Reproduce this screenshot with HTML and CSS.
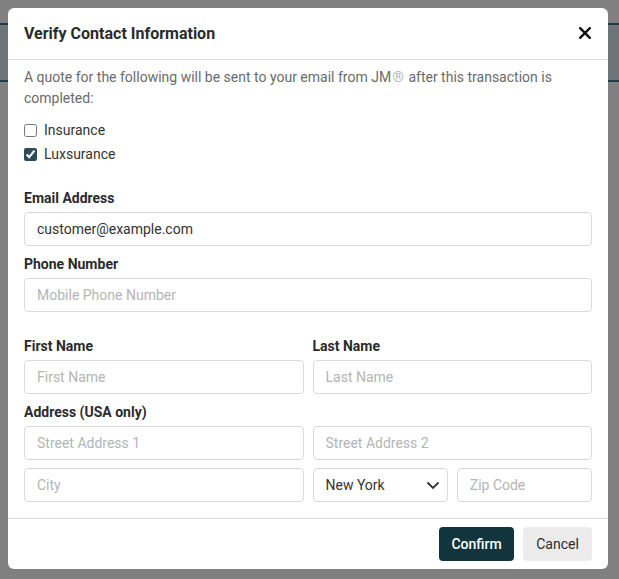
FILE: index.html
```html
<!DOCTYPE html>
<html lang="en">
<head>
<meta charset="utf-8">
<title>Verify Contact Information</title>
<link rel="stylesheet" href="styles.css">
</head>
<body>
<div class="page">
  <div class="page-band"></div>
</div>

<div class="modal" role="dialog" aria-labelledby="modal-title">
  <div class="modal-header">
    <h2 class="modal-title" id="modal-title">Verify Contact Information</h2>
    <button class="close-btn" type="button" aria-label="Close">
      <svg width="12" height="12" viewBox="0 0 12 12" aria-hidden="true">
        <path d="M1.2 1.2 L10.8 10.8 M10.8 1.2 L1.2 10.8" stroke="#111" stroke-width="2.4" stroke-linecap="square" fill="none"/>
      </svg>
    </button>
  </div>

  <div class="modal-body">
    <p class="intro">A quote for the following will be sent to your email from JM<span class="reg">®</span> after this transaction is completed:</p>

    <div class="checks">
      <label class="check-row"><input type="checkbox" class="check"> <span>Insurance</span></label>
      <label class="check-row"><input type="checkbox" class="check" checked> <span>Luxsurance</span></label>
    </div>

    <div class="field field-first">
      <label class="field-label" for="email">Email Address</label>
      <input class="input" id="email" type="text" value="customer@example.com">
    </div>

    <div class="field">
      <label class="field-label" for="phone">Phone Number</label>
      <input class="input" id="phone" type="text" placeholder="Mobile Phone Number">
    </div>

    <div class="grid-2 section">
      <div>
        <label class="field-label" for="fn">First Name</label>
        <input class="input" id="fn" type="text" placeholder="First Name">
      </div>
      <div>
        <label class="field-label" for="ln">Last Name</label>
        <input class="input" id="ln" type="text" placeholder="Last Name">
      </div>
    </div>

    <div class="field">
      <label class="field-label">Address (USA only)</label>
      <div class="grid-2">
        <input class="input" type="text" placeholder="Street Address 1">
        <input class="input" type="text" placeholder="Street Address 2">
      </div>
      <div class="grid-2 row-gap">
        <input class="input" type="text" placeholder="City">
        <div class="grid-2">
          <div class="select">
            <span>New York</span>
            <svg width="14" height="9" viewBox="0 0 14 9" aria-hidden="true">
              <path d="M1.5 1.5 L7 7 L12.5 1.5" stroke="#333" stroke-width="1.8" fill="none"/>
            </svg>
          </div>
          <input class="input" type="text" placeholder="Zip Code">
        </div>
      </div>
    </div>
  </div>

  <div class="modal-footer">
    <button class="btn btn-primary" type="button">Confirm</button>
    <button class="btn btn-secondary" type="button">Cancel</button>
  </div>
</div>
</body>
</html>
```

FILE: styles.css
```css
* {
  box-sizing: border-box;
}

html, body {
  margin: 0;
  padding: 0;
}

body {
  background: #808080;
  font-family: Roboto, "Liberation Sans", Arial, sans-serif;
  width: 619px;
  height: 579px;
  overflow: hidden;
  position: relative;
}

.page {
  padding-top: 23px;
}

.page-band {
  height: 59px;
  background: #6d757b;
  border-top: 2px solid #1f3c4a;
  border-bottom: 2px solid #1f3c4a;
}

.modal {
  position: absolute;
  top: 8px;
  left: 8px;
  width: 600px;
  height: 561px;
  background: #fff;
  border-radius: 6px;
  display: flex;
  flex-direction: column;
}

.modal-header {
  height: 52px;
  padding: 0 16px;
  display: flex;
  align-items: center;
  justify-content: space-between;
  border-bottom: 1px solid #dcdcdc;
}

.modal-title {
  margin: 0;
  font-size: 16px;
  font-weight: 700;
  color: #2b2b2b;
}

.close-btn {
  border: 0;
  background: none;
  padding: 0;
  width: 14px;
  height: 14px;
  display: flex;
  align-items: center;
  justify-content: center;
  margin-top: -1px;
}

.modal-body {
  flex: 1;
  padding: 7px 16px 0;
}

.intro {
  margin: 0;
  font-size: 14px;
  line-height: 21px;
  color: #6b6b6b;
}

.reg {
  color: #b8b8b8;
  font-size: 15px;
  padding: 0 1px;
}

.checks {
  margin-top: 9px;
}

.check-row {
  display: flex;
  align-items: center;
  height: 24px;
  font-size: 14px;
  color: #333;
}

.check {
  width: 13px;
  height: 13px;
  margin: 0 7px 0 0;
  accent-color: #2e4b57;
}

.field {
  margin-top: 8px;
}

.field-first {
  margin-top: 22px;
}

.section {
  margin-top: 24px;
}

.field-label {
  display: block;
  font-size: 14px;
  font-weight: 700;
  line-height: 20px;
  color: #2b2b2b;
  margin-bottom: 4px;
}

.input {
  display: block;
  width: 100%;
  height: 34px;
  border: 1px solid #dadada;
  border-radius: 4px;
  padding: 0 12px;
  font-family: Roboto, "Liberation Sans", Arial, sans-serif;
  font-size: 14px;
  color: #333;
  background: #fff;
}

.input::placeholder {
  color: #b5b5b5;
}

.grid-2 {
  display: grid;
  grid-template-columns: 1fr 1fr;
  column-gap: 9px;
}

.row-gap {
  margin-top: 8px;
}

.select {
  height: 34px;
  border: 1px solid #dadada;
  border-radius: 4px;
  padding: 0 7px 0 12px;
  display: flex;
  align-items: center;
  justify-content: space-between;
  font-size: 14px;
  color: #333;
}

.modal-footer {
  border-top: 1px solid #dcdcdc;
  padding: 8px 16px 8px;
  display: flex;
  justify-content: flex-end;
  gap: 9px;
}

.btn {
  height: 34px;
  border: 0;
  border-radius: 4px;
  font-family: Roboto, "Liberation Sans", Arial, sans-serif;
  font-size: 14px;
  padding: 0 12px;
}

.btn-primary {
  background: #12353d;
  color: #fff;
  width: 75px;
  font-weight: 500;
}

.btn-secondary {
  background: #ececec;
  color: #2b2b2b;
  width: 69px;
  font-weight: 400;
}
```
